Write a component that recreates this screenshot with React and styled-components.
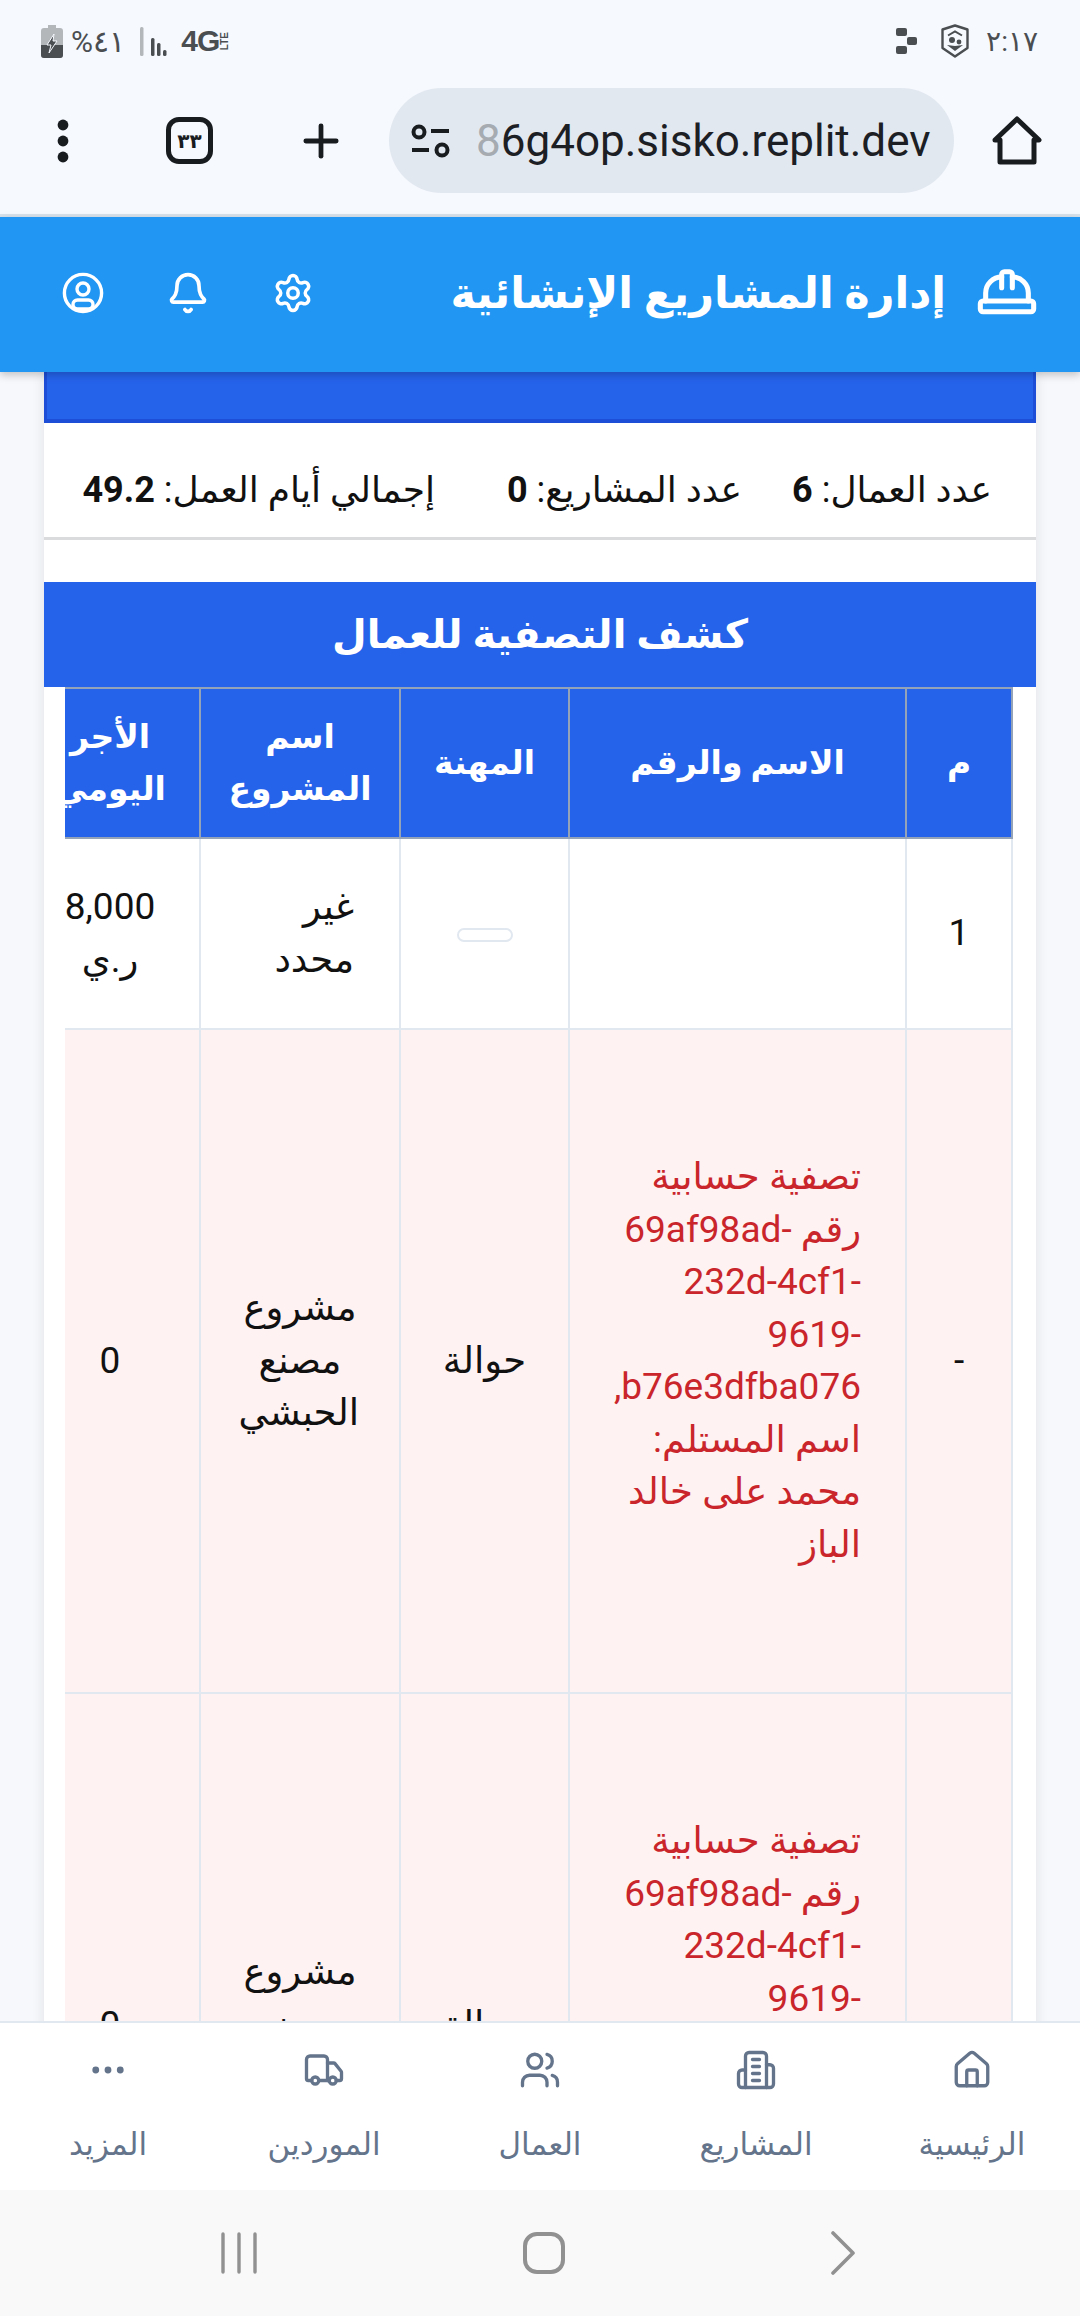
import React from 'react';
import styled, { createGlobalStyle } from 'styled-components';
import { HardHat, Settings, Bell, Home, Users, Truck, Ellipsis, Plus } from 'lucide-react';

const GlobalStyle = createGlobalStyle`
  html, body {
    margin: 0;
    padding: 0;
    background: #f8fafc;
  }
  * {
    box-sizing: border-box;
  }
`;

const FONT = `Roboto, "Open Sans", "Noto Sans", "DejaVu Sans", sans-serif`;

const settlementText = 'تصفية حسابية رقم 69af98ad-232d-4cf1-9619-b76e3dfba076, اسم المستلم: محمد على خالد الباز';

// lucide's current Building2 has a door, the one in the picture doesn't
const TowerIcon = ({ size }) => (
  <svg width={size} height={size} viewBox="0 0 24 24" fill="none" stroke="currentColor" strokeWidth="1.9" strokeLinecap="round" strokeLinejoin="round">
    <path d="M6 22V4a2 2 0 0 1 2-2h8a2 2 0 0 1 2 2v18Z" />
    <path d="M6 12H4a2 2 0 0 0-2 2v6a2 2 0 0 0 2 2h2" />
    <path d="M18 9h2a2 2 0 0 1 2 2v9a2 2 0 0 1-2 2h-2" />
    <path d="M10 6h4M10 10h4M10 14h4M10 18h4" />
  </svg>
);

const navItems = [
  { label: 'الرئيسية', Icon: Home },
  { label: 'المشاريع', Icon: TowerIcon },
  { label: 'العمال', Icon: Users },
  { label: 'الموردين', Icon: Truck },
  { label: 'المزيد', Icon: Ellipsis },
];

const App = () => {
  return (
    <Page>
      <GlobalStyle />

      <StatusBar>
        <StatusGroup>
          <svg width="22" height="33" viewBox="0 0 22 33">
            <path d="M7 0h8v3h4a3 3 0 0 1 3 3v24a3 3 0 0 1-3 3H3a3 3 0 0 1-3-3V6a3 3 0 0 1 3-3h4z" fill="#b4b7ba" />
            <path d="M0 20h22v10a3 3 0 0 1-3 3H3a3 3 0 0 1-3-3z" fill="#4b4e51" />
            <path d="M13 9l-7 11h4l-2 8 8-12h-4z" fill="#4b4e51" stroke="#f6f9fe" strokeWidth="1" />
          </svg>
          <Battery>٤١%</Battery>
          <svg width="30" height="29" viewBox="0 0 30 29">
            <rect x="0" y="0" width="3.5" height="29" rx="1.5" fill="#b4b7ba" />
            <rect x="11" y="11" width="3.5" height="18" rx="1.5" fill="#4b4e51" />
            <rect x="17" y="16" width="3.5" height="13" rx="1.5" fill="#4b4e51" />
            <rect x="23" y="23" width="3.5" height="6" rx="1.5" fill="#4b4e51" />
          </svg>
          <Network>
            4G<Lte>LTE</Lte>
          </Network>
        </StatusGroup>
        <StatusGroup>
          <svg width="22" height="26" viewBox="0 0 22 26">
            <rect x="0" y="0" width="11" height="8" rx="2" fill="#4b4e51" />
            <rect x="11" y="9" width="10" height="8" rx="2" fill="#4b4e51" />
            <rect x="0" y="18" width="11" height="8" rx="2" fill="#4b4e51" />
          </svg>
          <ShieldIcon width="28" height="34" viewBox="0 0 28 34" fill="none" stroke="#4b4e51">
            <path d="M14 1.5 26.5 5.5V24L14 32.5 1.5 24V5.5z" strokeWidth="2.4" strokeLinejoin="round" />
            <path d="M7 11.5 14 7.5l7 4" strokeWidth="2" />
            <circle cx="11" cy="16" r="3" fill="#4b4e51" stroke="none" />
            <circle cx="18" cy="18" r="2.4" fill="#4b4e51" stroke="none" />
            <path d="M6 21l8 6 8-6-8 1z" fill="#4b4e51" stroke="none" />
          </ShieldIcon>
          <Clock>٢:١٧</Clock>
        </StatusGroup>
      </StatusBar>

      <BrowserBar>
        <BarSlot>
          <svg width="12" height="44" viewBox="0 0 12 44" fill="#181c1f">
            <circle cx="6" cy="6" r="5.4" />
            <circle cx="6" cy="22" r="5.4" />
            <circle cx="6" cy="38" r="5.4" />
          </svg>
        </BarSlot>
        <BarSlot>
          <TabCounter>٣٣</TabCounter>
        </BarSlot>
        <BarSlot>
          <Plus size={52} color="#181c1f" strokeWidth={2.2} />
        </BarSlot>
        <UrlPill>
          <svg width="40" height="34" viewBox="0 0 40 34" fill="none" stroke="#181c1f" strokeWidth="4">
            <circle cx="8" cy="8" r="5.5" />
            <path d="M20 7h18M1 26h17" />
            <circle cx="31" cy="26" r="5.5" />
          </svg>
          <UrlText>
            <FadedChar>8</FadedChar>6g4op.sisko.replit.dev
          </UrlText>
        </UrlPill>
        <BarSlot>
          <svg width="50" height="50" viewBox="0 0 50 50" fill="none" stroke="#181c1f" strokeWidth="5" strokeLinejoin="round" strokeLinecap="round">
            <path d="M3 24 25 3l22 21h-5v22H8V24z" />
          </svg>
        </BarSlot>
      </BrowserBar>

      <AppHeader>
        <Brand>
          <HardHat size={64} strokeWidth={1.9} />
          <BrandTitle>إدارة المشاريع الإنشائية</BrandTitle>
        </Brand>
        <HeaderActions>
          <Settings size={42} strokeWidth={2} />
          <Bell size={44} strokeWidth={2} />
          <svg width="42" height="42" viewBox="0 0 42 42" fill="none" stroke="#fff" strokeWidth="3.4">
            <circle cx="21" cy="21" r="18.6" />
            <circle cx="21" cy="17" r="6" />
            <rect x="11" y="28" width="20" height="9" rx="4.5" />
          </svg>
        </HeaderActions>
      </AppHeader>

      <Main>
        <Sheet>
          <ReportBanner />
          <Summary>
            <SummaryItem $gap={50}>
              عدد العمال: <strong>6</strong>
            </SummaryItem>
            <SummaryItem $gap={72}>
              عدد المشاريع: <strong>0</strong>
            </SummaryItem>
            <SummaryItem>
              إجمالي أيام العمل: <strong>49.2</strong>
            </SummaryItem>
          </Summary>

          <TableTitle>كشف التصفية للعمال</TableTitle>
          <TableClip>
            <Table>
              <colgroup>
                <col width="106" />
                <col width="337" />
                <col width="169" />
                <col width="200" />
                <col width="180" />
              </colgroup>
              <thead>
                <tr>
                  <Th>م</Th>
                  <Th>الاسم والرقم</Th>
                  <Th>المهنة</Th>
                  <Th>اسم المشروع</Th>
                  <Th>الأجر اليومي</Th>
                </tr>
              </thead>
              <tbody>
                <WorkerRow>
                  <Td>1</Td>
                  <Td />
                  <Td>
                    <EmptyBadge />
                  </Td>
                  <Td $start>غير محدد</Td>
                  <Td>8,000 ر.ي</Td>
                </WorkerRow>
                <SettlementRow>
                  <Td>-</Td>
                  <NoteCell>{settlementText}</NoteCell>
                  <Td>حوالة</Td>
                  <Td>مشروع مصنع الحبشي</Td>
                  <Td>0</Td>
                </SettlementRow>
                <SettlementRow>
                  <Td>-</Td>
                  <NoteCell>{settlementText}</NoteCell>
                  <Td>حوالة</Td>
                  <Td>مشروع مصنع الحبشي</Td>
                  <Td>0</Td>
                </SettlementRow>
              </tbody>
            </Table>
          </TableClip>
        </Sheet>
      </Main>

      <BottomNav>
        {navItems.map(({ label, Icon }) => (
          <NavItem key={label}>
            <Icon size={42} strokeWidth={1.9} />
            <NavLabel>{label}</NavLabel>
          </NavItem>
        ))}
      </BottomNav>

      <SystemBar>
        <svg width="38" height="42" viewBox="0 0 38 42" stroke="#919191" strokeWidth="3.4" strokeLinecap="round">
          <path d="M3 2v38M19 2v38M35 2v38" />
        </svg>
        <svg width="42" height="42" viewBox="0 0 42 42" fill="none" stroke="#919191" strokeWidth="4">
          <rect x="2" y="2" width="38" height="38" rx="12" />
        </svg>
        <svg width="26" height="44" viewBox="0 0 26 44" fill="none" stroke="#919191" strokeWidth="3.6" strokeLinecap="round" strokeLinejoin="round">
          <path d="M3 2l20 20L3 42" />
        </svg>
      </SystemBar>
    </Page>
  );
};

const Page = styled.div`
  width: 1080px;
  height: 2316px;
  display: flex;
  flex-direction: column;
  overflow: hidden;
  font-family: ${FONT};
  background: #f6f8fb;
`;

const StatusBar = styled.div`
  height: 70px;
  flex: none;
  display: flex;
  justify-content: space-between;
  align-items: center;
  padding: 12px 42px 0 41px;
  background: #f6f9fe;
  color: #4b4e51;
`;

const StatusGroup = styled.div`
  display: flex;
  align-items: center;
  gap: 8px;
`;

const Battery = styled.span`
  direction: rtl;
  font-size: 30px;
  margin-right: 7px;
`;

const Network = styled.span`
  display: flex;
  align-items: center;
  margin-left: 3px;
  font-family: "Liberation Sans", sans-serif;
  font-weight: 700;
  font-size: 30px;
  letter-spacing: -1px;
`;

const Lte = styled.span`
  writing-mode: vertical-rl;
  transform: rotate(180deg);
  font-size: 10px;
  letter-spacing: 0;
  margin-right: 1px;
`;

const ShieldIcon = styled.svg`
  margin: 0 9px 0 15px;
`;

const Clock = styled.span`
  font-size: 28px;
  letter-spacing: -1px;
`;

const BrowserBar = styled.div`
  height: 147px;
  flex: none;
  display: grid;
  grid-template-columns: 126px 127px 136px 565px 1fr;
  align-items: center;
  padding-bottom: 3px;
  background: #f6f9fe;
  border-bottom: 3px solid #d9e3ec;
`;

const BarSlot = styled.div`
  display: flex;
  justify-content: center;
  align-items: center;
`;

const TabCounter = styled.div`
  width: 47px;
  height: 47px;
  display: flex;
  justify-content: center;
  align-items: center;
  border: 5px solid #181c1f;
  border-radius: 13px;
  color: #181c1f;
  font-size: 20px;
  font-weight: 700;
`;

const UrlPill = styled.div`
  height: 105px;
  display: flex;
  align-items: center;
  gap: 25px;
  padding-left: 22px;
  border-radius: 53px;
  background: #e2e8f0;
`;

const UrlText = styled.span`
  font-family: Roboto, sans-serif;
  font-size: 44px;
  color: #1c2024;
  white-space: nowrap;
`;

const FadedChar = styled.span`
  color: #a5abb1;
`;

const AppHeader = styled.header`
  height: 155px;
  flex: none;
  display: flex;
  justify-content: space-between;
  align-items: center;
  direction: rtl;
  padding: 0 41px 4px 62px;
  background: #2196f3;
  color: #fff;
  box-shadow: 0 3px 8px rgba(0, 0, 0, 0.22);
  position: relative;
  z-index: 2;
`;

const Brand = styled.div`
  display: flex;
  align-items: center;
  gap: 29px;
`;

const BrandTitle = styled.h1`
  margin: 0;
  font-size: 43px;
  font-weight: 700;
`;

const HeaderActions = styled.div`
  display: flex;
  align-items: center;
  gap: 62px;
`;

const Main = styled.main`
  flex: 1;
  min-height: 0;
  overflow: hidden;
  padding: 0 44px;
  direction: rtl;
`;

const Sheet = styled.div`
  background: #fff;
  box-shadow: 0 0 12px rgba(30, 41, 59, 0.1);
`;

const ReportBanner = styled.div`
  height: 51px;
  background: #2563eb;
  border: solid #1d4ed8;
  border-width: 0 3px 4px;
`;

const Summary = styled.div`
  height: 117px;
  display: flex;
  align-items: center;
  padding: 20px 44px 0 42px;
  border-bottom: 3px solid #d9dbdd;
  margin-bottom: 42px;
  font-size: 36px;
  color: #111;
`;

const SummaryItem = styled.div`
  flex: none;
  white-space: nowrap;
  margin-left: ${(props) => props.$gap || 0}px;

  strong {
    font-weight: 700;
  }
`;

const TableTitle = styled.h2`
  height: 105px;
  margin: 0;
  display: flex;
  justify-content: center;
  align-items: center;
  background: #2563eb;
  color: #fff;
  font-size: 40px;
  font-weight: 700;
`;

const TableClip = styled.div`
  margin: 0 23px 0 21px;
  overflow: hidden;
`;

const Table = styled.table`
  width: 992px;
  table-layout: fixed;
  border-collapse: collapse;
  font-size: 37px;
  line-height: 52.5px;
  color: #111;
`;

const Th = styled.th`
  height: 150px;
  padding: 0 20px;
  background: #2563eb;
  border: 2px solid #94a3b8;
  color: #fff;
  font-size: 33px;
  font-weight: 700;
  text-align: center;
`;

const Td = styled.td`
  padding: 0 ${(props) => (props.$start ? '45px' : '40px')} 0 40px;
  border: 2px solid #e2e8f0;
  text-align: ${(props) => (props.$start ? 'right' : 'center')};
  vertical-align: middle;
`;

const WorkerRow = styled.tr`
  height: 191px;
  background: #fff;
`;

const SettlementRow = styled.tr`
  height: 664px;
  background: #fef2f2;
`;

const NoteCell = styled(Td)`
  padding: 0 44px 0 36px;
  color: #c9252b;
  text-align: right;
`;

const EmptyBadge = styled.span`
  display: inline-block;
  width: 56px;
  height: 14px;
  vertical-align: middle;
  border: 2px solid #e2e8f0;
  border-radius: 7px;
  background: #fff;
`;

const BottomNav = styled.nav`
  height: 169px;
  flex: none;
  display: grid;
  grid-template-columns: repeat(5, 216px);
  direction: rtl;
  background: #fff;
  border-top: 2px solid #e2e8f0;
  position: relative;
  z-index: 1;
`;

const NavItem = styled.div`
  display: flex;
  flex-direction: column;
  align-items: center;
  padding-top: 26px;
  gap: 32px;
  color: #64748b;
`;

const NavLabel = styled.span`
  font-size: 31px;
  line-height: 44px;
`;

const SystemBar = styled.div`
  height: 126px;
  flex: none;
  display: flex;
  justify-content: space-between;
  align-items: center;
  padding: 0 224px 0 220px;
  background: #f9f9f9;
`;

export default App;
